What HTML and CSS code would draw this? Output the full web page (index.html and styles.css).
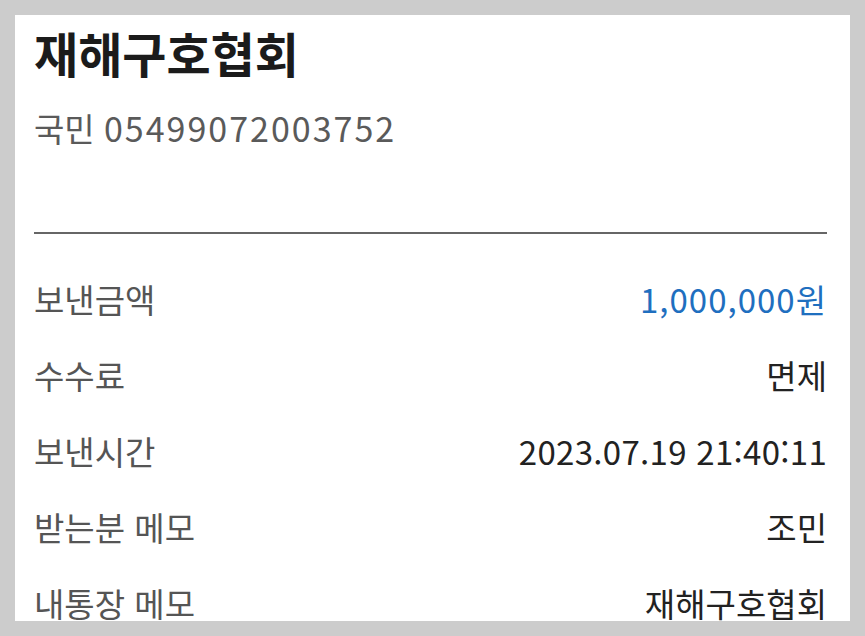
FILE: index.html
```html
<!doctype html>
<html lang="ko">
<head>
    <meta charset="UTF-8">
    <meta name="viewport" content="width=device-width, initial-scale=1.0">
    <title>이체 결과</title>
    <link rel="stylesheet" href="styles.css">
</head>
<body>
    <div class="card">
        <h1 class="name">재해구호협회</h1>
        <p class="account">국민 <span class="num">05499072003752</span></p>
        <div class="line"></div>
        <ul class="info">
            <li><span class="label">보낸금액</span><span class="val blue">1,000,000원</span></li>
            <li><span class="label">수수료</span><span class="val">면제</span></li>
            <li><span class="label">보낸시간</span><span class="val date">2023.07.19 21:40:11</span></li>
            <li><span class="label">받는분 메모</span><span class="val">조민</span></li>
            <li><span class="label">내통장 메모</span><span class="val">재해구호협회</span></li>
        </ul>
    </div>
</body>
</html>
```

FILE: styles.css
```css
*{
    margin: 0;
    padding: 0;
    list-style: none;
    box-sizing: border-box;
}
html,body{
    background: #cccccc;
}
body{
    padding: 15px;
    height: 636px;
    font-family: "Noto Sans CJK KR", "Noto Sans", sans-serif;
}
.card{
    width: 835px;
    height: 606px;
    background: #fff;
    overflow: hidden;
    padding: 8px 23px 0 19px;
}
.name{
    font-size: 48px;
    line-height: 58px;
    font-weight: 700;
    color: #1b1b1b;
}
.account{
    margin-top: 25px;
    font-size: 33px;
    line-height: 44px;
    height: 44px;
    color: #5a5a5a;
}
.account .num{
    font-size: 34px;
    letter-spacing: 2px;
}
.line{
    margin-top: 82px;
    height: 2px;
    background: #666;
}
.info{
    margin-top: 27px;
}
.info>li{
    display: flex;
    justify-content: space-between;
    height: 76px;
    line-height: 76px;
    font-size: 33px;
}
.label{
    color: #555;
}
.val{
    color: #222;
}
.blue{
    color: #1f6fbf;
    letter-spacing: 1px;
}
.date{
    letter-spacing: 0.3px;
}
```
